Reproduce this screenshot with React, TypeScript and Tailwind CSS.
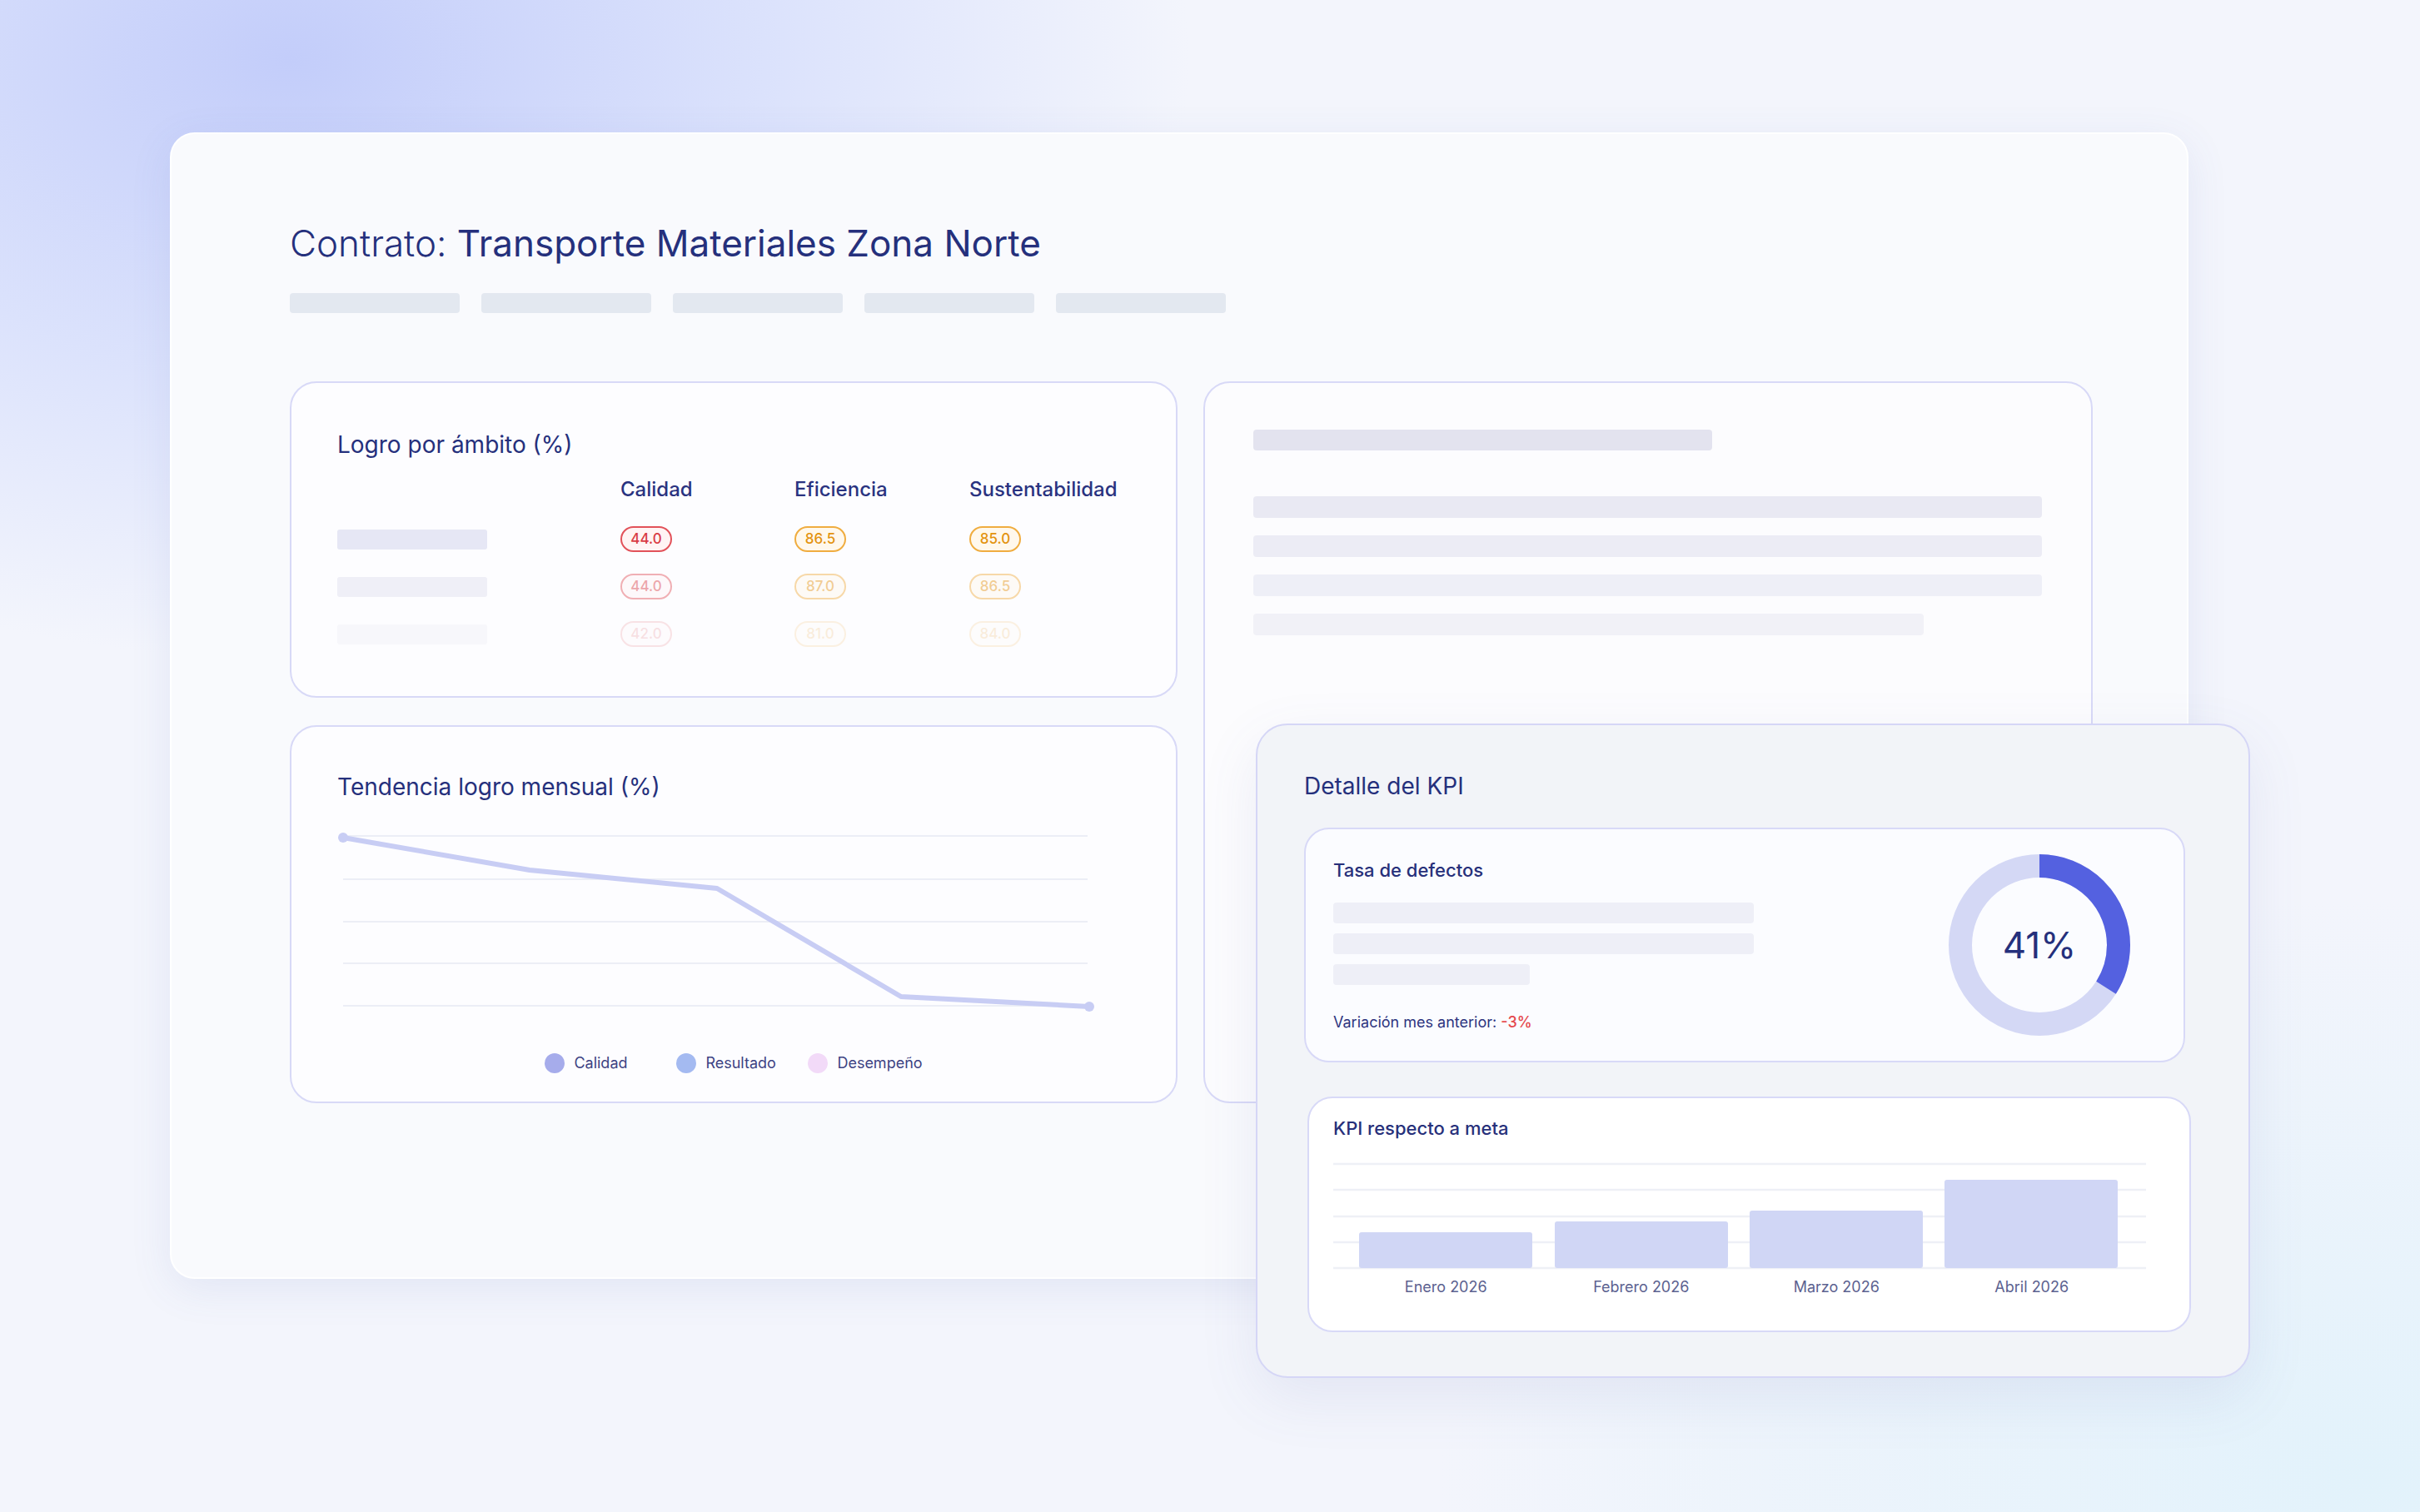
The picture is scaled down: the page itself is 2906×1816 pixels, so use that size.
const navy = 'text-[#25307c]';

const rows = [
  { values: ['44.0', '86.5', '85.0'], bar: 'bg-[#e6e7f5]', fade: 'opacity-100' },
  { values: ['44.0', '87.0', '86.5'], bar: 'bg-[#efeff7]', fade: 'opacity-45' },
  { values: ['42.0', '81.0', '84.0'], bar: 'bg-[#f7f7fb]', fade: 'opacity-15' },
];

const Badge = ({ value, tone }: { value: string; tone: 'red' | 'orange' }) => (
  <span
    className={
      tone === 'red'
        ? 'inline-flex h-[31px] w-[62px] items-center justify-center rounded-full border-2 border-[#e2525a] bg-[#fff4f4] text-[17px] font-medium text-[#d93c45]'
        : 'inline-flex h-[31px] w-[62px] items-center justify-center rounded-full border-2 border-[#f0ad40] bg-[#fff8ec] text-[17px] font-medium text-[#e3930f]'
    }
  >
    {value}
  </span>
);

const LogroCard = () => (
  <div className="h-[380px] rounded-[32px] border-2 border-[#d8d9f7] bg-[#fdfdff] pl-[55px] pt-[56px]">
    <h2 className={`text-[28px] leading-[36px] ${navy}`}>Logro por ámbito (%)</h2>
    <div className="mt-[21px] flex text-[24px] leading-[30px] font-medium text-[#2a3380]">
      <div className="w-[340px]" />
      <div className="w-[209px]">Calidad</div>
      <div className="w-[210px]">Eficiencia</div>
      <div>Sustentabilidad</div>
    </div>
    <div className="mt-[16px]">
      {rows.map((row, i) => (
        <div key={i} className="flex h-[57px] items-center">
          <div className="w-[340px]">
            <div className={`h-[24px] w-[180px] rounded-[3px] ${row.bar}`} />
          </div>
          <div className={`flex ${row.fade}`}>
            <div className="w-[209px]">
              <Badge value={row.values[0]} tone="red" />
            </div>
            <div className="w-[210px]">
              <Badge value={row.values[1]} tone="orange" />
            </div>
            <div>
              <Badge value={row.values[2]} tone="orange" />
            </div>
          </div>
        </div>
      ))}
    </div>
  </div>
);

const TendenciaCard = () => {
  const grid = [9, 61, 112, 162, 213];
  const pts = [
    [7, 11],
    [231, 50],
    [456, 72],
    [677, 202],
    [903, 214],
  ];
  const legend = [
    { label: 'Calidad', color: 'bg-[#a6aceb]', w: 'w-[158px]' },
    { label: 'Resultado', color: 'bg-[#a4baf1]', w: 'w-[158px]' },
    { label: 'Desempeño', color: 'bg-[#f2daf8]', w: '' },
  ];
  return (
    <div className="h-[454px] rounded-[32px] border-2 border-[#d8d9f7] bg-[#fdfdff] pl-[55px] pt-[54px]">
      <h2 className={`text-[28px] leading-[36px] ${navy}`}>Tendencia logro mensual (%)</h2>
      <svg className="mt-[32px]" width="912" height="224" viewBox="0 0 912 224">
        {grid.map((y) => (
          <line key={y} x1="7" x2="901" y1={y} y2={y} stroke="#eceef6" strokeWidth="2" />
        ))}
        <polyline
          points={pts.map((p) => p.join(',')).join(' ')}
          fill="none"
          stroke="#c8cdf4"
          strokeWidth="6"
          strokeLinejoin="round"
          strokeLinecap="round"
        />
        <circle cx="7" cy="11" r="6" fill="#c8cdf4" />
        <circle cx="903" cy="214" r="6" fill="#c8cdf4" />
      </svg>
      <div className="mt-[46px] flex justify-center pr-[55px]">
        {legend.map((l) => (
          <div key={l.label} className={`flex items-center gap-[11px] ${l.w}`}>
            <span className="h-[24px] w-[24px] shrink-0 rounded-full">
              <span className={`block h-full w-full rounded-full ${l.color}`} />
            </span>
            <span className="text-[18px] leading-[24px] text-[#3d4383]">{l.label}</span>
          </div>
        ))}
      </div>
    </div>
  );
};

const SkeletonCard = () => (
  <div className="h-[867px] w-[1068px] rounded-[32px] border-2 border-[#d8d9f7] bg-[#fcfcfe] pl-[58px] pt-[56px]">
    <div className="h-[25px] w-[551px] rounded-[4px] bg-[#e3e3ef]" />
    <div className="mt-[55px] flex flex-col gap-[21px]">
      <div className="h-[26px] w-[947px] rounded-[4px] bg-[#e9e9f3]" />
      <div className="h-[26px] w-[947px] rounded-[4px] bg-[#ececf5]" />
      <div className="h-[26px] w-[947px] rounded-[4px] bg-[#eeeff7]" />
      <div className="h-[26px] w-[805px] rounded-[4px] bg-[#f1f1f7]" />
    </div>
  </div>
);

const Donut = () => {
  const r = 95;
  const c = 2 * Math.PI * r;
  const p = 0.34;
  return (
    <div className="relative h-[218px] w-[218px]">
      <svg width="218" height="218" viewBox="0 0 218 218" className="-rotate-90">
        <circle cx="109" cy="109" r={r} fill="none" stroke="#d4d8f5" strokeWidth="28" />
        <circle
          cx="109"
          cy="109"
          r={r}
          fill="none"
          stroke="#5461e0"
          strokeWidth="28"
          strokeDasharray={`${c * p} ${c}`}
        />
      </svg>
      <div className={`absolute inset-0 flex items-center justify-center text-[44px] ${navy}`}>41%</div>
    </div>
  );
};

const KpiBars = () => {
  const grid = [2, 33, 65, 96, 127];
  const bars = [
    { x: 31, top: 84 },
    { x: 266, top: 71 },
    { x: 500, top: 58 },
    { x: 734, top: 21 },
  ];
  const labels = ['Enero 2026', 'Febrero 2026', 'Marzo 2026', 'Abril 2026'];
  return (
    <>
      <svg className="mt-[27px]" width="978" height="130" viewBox="0 0 978 130">
        {grid.map((y) => (
          <line key={y} x1="0" x2="976" y1={y} y2={y} stroke="#eef0f6" strokeWidth="2.5" />
        ))}
        {bars.map((b) => (
          <rect key={b.x} x={b.x} y={b.top} width="208" height={127 - b.top} rx="3" fill="#d0d6f5" />
        ))}
      </svg>
      <div className="ml-[18px] mt-[8px] grid w-[938px] grid-cols-4 text-center text-[18px] leading-[24px] text-[#5c6290]">
        {labels.map((l) => (
          <div key={l}>{l}</div>
        ))}
      </div>
    </>
  );
};

const DetalleKpi = () => (
  <div className="absolute left-[1508px] top-[869px] h-[786px] w-[1194px] rounded-[38px] border-2 border-[#d5d6f6] bg-[#f2f4f8] pl-[56px] pt-[55px] shadow-[0_24px_70px_rgba(90,100,170,0.10)]">
    <h2 className={`text-[28px] leading-[36px] ${navy}`}>Detalle del KPI</h2>
    <div className="mt-[32px] flex h-[282px] w-[1058px] items-center justify-between rounded-[30px] border-2 border-[#d8d9f7] bg-[#fbfcff] pl-[33px] pr-[64px]">
      <div>
        <div className="text-[22px] leading-[28px] font-medium text-[#27307a]">Tasa de defectos</div>
        <div className="mt-[25px] flex flex-col gap-[12px]">
          <div className="h-[25px] w-[505px] rounded-[4px] bg-[#eeeff7]" />
          <div className="h-[25px] w-[505px] rounded-[4px] bg-[#eeeff7]" />
          <div className="h-[25px] w-[236px] rounded-[4px] bg-[#eeeff7]" />
        </div>
        <div className="mt-[33px] text-[18px] leading-[24px] text-[#2e3580]">
          Variación mes anterior: <span className="font-medium text-[#e5484d]">-3%</span>
        </div>
      </div>
      <Donut />
    </div>
    <div className="ml-[4px] mt-[41px] h-[283px] w-[1061px] rounded-[30px] border-2 border-[#d8d9f7] bg-white pl-[29px] pt-[22px]">
      <div className="text-[22px] leading-[28px] font-medium text-[#27307a]">KPI respecto a meta</div>
      <KpiBars />
    </div>
  </div>
);

export default function App() {
  return (
    <div className="relative h-[1816px] w-[2906px] overflow-hidden bg-[#f3f5fc] bg-[radial-gradient(ellipse_1500px_1000px_at_12%_4%,#c3cdfa_0%,#dbe2fc_38%,#f3f5fc00_72%),radial-gradient(ellipse_1600px_1000px_at_98%_98%,#e2f2fb_0%,#f3f5fc00_70%)] pl-[204px] pt-[159px] font-['Inter','Noto_Sans',sans-serif]">
      <div className="h-[1377px] w-[2424px] rounded-[30px] border-2 border-white bg-[#f9fafd] pl-[142px] pt-[105px] shadow-[0_12px_50px_rgba(80,95,180,0.10)]">
        <h1 className={`text-[44px] leading-[53px] ${navy}`}>
          <span className="font-light">Contrato:</span> Transporte Materiales Zona Norte
        </h1>
        <div className="mt-[33px] flex gap-[26px]">
          {[0, 1, 2, 3, 4].map((i) => (
            <div key={i} className="h-[24px] w-[204px] rounded-[4px] bg-[#e3e8f0]" />
          ))}
        </div>
        <div className="mt-[82px] flex gap-[31px]">
          <div className="flex w-[1066px] flex-col gap-[33px]">
            <LogroCard />
            <TendenciaCard />
          </div>
          <SkeletonCard />
        </div>
      </div>
      <DetalleKpi />
    </div>
  );
}
